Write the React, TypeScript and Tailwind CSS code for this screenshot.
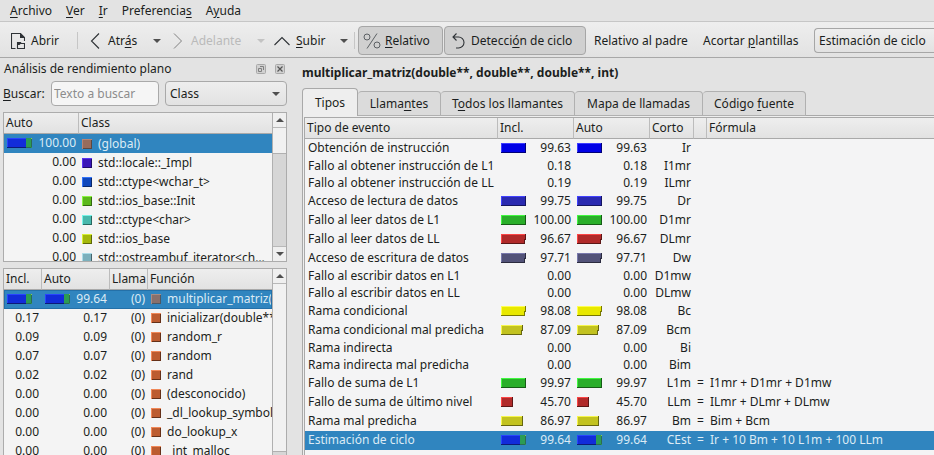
import type { ReactNode } from 'react';

const HEADER_BG = 'bg-linear-to-b from-[#eeeeee] to-[#e2e2e2]';

function Caret({ muted = false }: { muted?: boolean }) {
  return (
    <svg width="8" height="4" viewBox="0 0 8 4" className="shrink-0" aria-hidden="true">
      <path d="M0 0H8L4 4Z" fill={muted ? '#c3c3c3' : '#4f4f4f'} />
    </svg>
  );
}

function ScrollArrow({ up = false }: { up?: boolean }) {
  return (
    <svg width="8" height="4" viewBox="0 0 8 4" aria-hidden="true">
      <path d={up ? 'M0 4H8L4 0Z' : 'M0 0H8L4 4Z'} fill="#4f4f4f" />
    </svg>
  );
}

type Tone = { fill: string; light: string; dark: string };

const tones: Record<string, Tone> = {
  blue: { fill: '#0000e6', light: '#3c3cff', dark: '#000078' },
  indigo: { fill: '#2a2ab0', light: '#4141ff', dark: '#151560' },
  green: { fill: '#2aae2a', light: '#41f841', dark: '#165c16' },
  red: { fill: '#b02a2a', light: '#fb4545', dark: '#5c1616' },
  slate: { fill: '#525278', light: '#7878ac', dark: '#2a2a3e' },
  yellow: { fill: '#e8e800', light: '#ffff50', dark: '#787800' },
  olive: { fill: '#c2c220', light: '#f6f64c', dark: '#666610' },
};

function Bar({ tone, width = 25, notch = false }: { tone: string; width?: number; notch?: boolean }) {
  if (tone === 'cycle') {
    return (
      <svg width="25" height="10" viewBox="0 0 25 10" className="shrink-0" shapeRendering="crispEdges" aria-hidden="true">
        <path d="M0 0H19V10H0Z" fill="#122cda" />
        <path d="M0 0H19V1H1V10H0Z" fill="#2844ff" />
        <path d="M0 9H19V10H0Z" fill="#0c1a78" />
        <path d="M19 0H25V10H19Z" fill="#2c9c54" />
        <path d="M19 9H24V10H19ZM24 1H25V9H24Z" fill="#2c6c50" />
        <path d="M24 0H25V1H24Z" fill="#8cc850" />
      </svg>
    );
  }
  const { fill, light, dark } = tones[tone];
  const w = width;
  const shape = notch ? `M0 0H${w}V6H${w - 1}V10H0Z` : `M0 0H${w}V10H0Z`;
  const shade = notch
    ? `M0 9H${w - 2}V5H${w - 1}V0H${w}V6H${w - 1}V10H0Z`
    : `M0 9H${w - 1}V0H${w}V10H0Z`;
  return (
    <svg width={w} height="10" viewBox={`0 0 ${w} 10`} className="shrink-0" shapeRendering="crispEdges" aria-hidden="true">
      <path d={shape} fill={fill} />
      <path d={`M0 0H${w - 1}V1H1V9H0Z`} fill={light} />
      <path d={shade} fill={dark} />
    </svg>
  );
}

function Swatch({ fill, light, dark }: Tone) {
  return (
    <svg width="10" height="10" viewBox="0 0 10 10" className="shrink-0" shapeRendering="crispEdges" aria-hidden="true">
      <path d="M0 0H10V10H0Z" fill={fill} />
      <path d="M0 0H10V1H1V10H0Z" fill={light} />
      <path d="M9 1H10V10H1V9H9Z" fill={dark} />
    </svg>
  );
}

function BarCell({ bar, value }: { bar?: ReactNode; value?: string }) {
  return (
    <td className="p-0 pr-[3px] pb-px pl-[3px]">
      <div className="flex items-center justify-between">
        <span className="flex">{bar}</span>
        <span>{value}</span>
      </div>
    </td>
  );
}

function Th({ children, last = false }: { children?: ReactNode; last?: boolean }) {
  return (
    <th
      scope="col"
      className={`h-[21px] overflow-hidden border-b border-b-[#a9a9a9] p-0 pl-0.5 text-left font-normal whitespace-nowrap ${HEADER_BG} ${
        last ? '' : 'border-r border-r-[#bcbcbc]'
      }`}
    >
      {children}
    </th>
  );
}

function Scrollbar({ thumb, down = true }: { thumb: string; down?: boolean }) {
  return (
    <div className="flex w-[14px] shrink-0 flex-col border-l border-[#b0b0b0] bg-[#d6d6d6]">
      <button type="button" aria-label="Subir lista" className="flex h-[15px] shrink-0 items-center justify-center border-b border-[#b8b8b8] bg-[#efefef]">
        <ScrollArrow up />
      </button>
      <div className={`border-b border-[#b0b0b0] bg-[#f1f1f1] ${thumb}`} />
      <div className="flex-1" />
      {down && (
        <button type="button" aria-label="Bajar lista" className="flex h-[15px] shrink-0 items-center justify-center border-t border-[#b8b8b8] bg-[#efefef]">
          <ScrollArrow />
        </button>
      )}
    </div>
  );
}

const classes = [
  { value: '100.00', name: '(global)', fill: '#986c5c', light: '#b88474', dark: '#5c4840' },
  { value: '0.00', name: 'std::locale::_Impl', fill: '#3a16b8', light: '#5a34f0', dark: '#200c68' },
  { value: '0.00', name: 'std::ctype<wchar_t>', fill: '#1048bc', light: '#3474f8', dark: '#0a2868' },
  { value: '0.00', name: 'std::ios_base::Init', fill: '#5cb81c', light: '#8cf444', dark: '#346810' },
  { value: '0.00', name: 'std::ctype<char>', fill: '#48b8ac', light: '#78f4e8', dark: '#286860' },
  { value: '0.00', name: 'std::ios_base', fill: '#a4b80c', light: '#d8f034', dark: '#5c6808' },
  { value: '0.00', name: 'std::ostreambuf_iterator<char>', fill: '#7cb0bc', light: '#acdce8', dark: '#46646c' },
];

const functions = [
  ['99.64', 'multiplicar_matriz(double**, double**)'],
  ['0.17', 'inicializar(double**, int)'],
  ['0.09', 'random_r'],
  ['0.07', 'random'],
  ['0.02', 'rand'],
  ['0.00', '(desconocido)'],
  ['0.00', '_dl_lookup_symbol_x'],
  ['0.00', 'do_lookup_x'],
  ['0.00', '_int_malloc'],
];

type EventRow = { name: string; value: string; short: string; tone?: string; width?: number; notch?: boolean; formula?: string };

const events: EventRow[] = [
  { name: 'Obtención de instrucción', value: '99.63', short: 'Ir', tone: 'blue' },
  { name: 'Fallo al obtener instrucción de L1', value: '0.18', short: 'I1mr' },
  { name: 'Fallo al obtener instrucción de LL', value: '0.19', short: 'ILmr' },
  { name: 'Acceso de lectura de datos', value: '99.75', short: 'Dr', tone: 'indigo' },
  { name: 'Fallo al leer datos de L1', value: '100.00', short: 'D1mr', tone: 'green' },
  { name: 'Fallo al leer datos de LL', value: '96.67', short: 'DLmr', tone: 'red', notch: true },
  { name: 'Acceso de escritura de datos', value: '97.71', short: 'Dw', tone: 'slate', notch: true },
  { name: 'Fallo al escribir datos en L1', value: '0.00', short: 'D1mw' },
  { name: 'Fallo al escribir datos en LL', value: '0.00', short: 'DLmw' },
  { name: 'Rama condicional', value: '98.08', short: 'Bc', tone: 'yellow', notch: true },
  { name: 'Rama condicional mal predicha', value: '87.09', short: 'Bcm', tone: 'olive', width: 22, notch: true },
  { name: 'Rama indirecta', value: '0.00', short: 'Bi' },
  { name: 'Rama indirecta mal predicha', value: '0.00', short: 'Bim' },
  { name: 'Fallo de suma de L1', value: '99.97', short: 'L1m', tone: 'green', formula: 'I1mr + D1mr + D1mw' },
  { name: 'Fallo de suma de último nivel', value: '45.70', short: 'LLm', tone: 'red', width: 12, formula: 'ILmr + DLmr + DLmw' },
  { name: 'Rama mal predicha', value: '86.97', short: 'Bm', tone: 'olive', width: 22, formula: 'Bim + Bcm' },
  { name: 'Estimación de ciclo', value: '99.64', short: 'CEst', tone: 'cycle', formula: 'Ir + 10 Bm + 10 L1m + 100 LLm' },
];

function U({ children }: { children: ReactNode }) {
  return <span className="underline decoration-1 underline-offset-2">{children}</span>;
}

function MenuBar() {
  return (
    <nav className="flex h-[22px] shrink-0 items-center gap-[14px] border-b border-[#c6c6c6] px-[10px]">
      <button type="button"><U>A</U>rchivo</button>
      <button type="button"><U>V</U>er</button>
      <button type="button"><U>I</U>r</button>
      <button type="button">Preferencia<U>s</U></button>
      <button type="button">A<U>y</U>uda</button>
    </nav>
  );
}

const stroke = { fill: 'none', stroke: '#2e3236', strokeWidth: 1.1 };

function ToolBar() {
  return (
    <div className={`flex h-9 shrink-0 items-center overflow-hidden border-b border-[#a8a8a8] pt-0.5 whitespace-nowrap ${HEADER_BG}`}>
      <button type="button" className="flex w-[77px] shrink-0 items-center gap-1.5 pl-[11px]">
        <svg width="14" height="16" viewBox="0 0 14 16" aria-hidden="true">
          <path d="M4.500 15.500H.5V.5H9.500L13.500 4.500V8" {...stroke} />
          <path d="M9 0L14 5H9Z" fill="#2e3236" />
          <path d="M6.500 9.500H9L10 10.500H13.500V15.500H6.500Z" {...stroke} />
          <path d="M6 9H9.500L10.500 10L8.500 12H6Z" fill="#2e3236" />
        </svg>
        Abrir
      </button>
      <div className="h-[17px] w-px shrink-0 bg-[#c6c6c6]" />
      <button type="button" className="flex w-[75px] shrink-0 items-center gap-2 pl-3">
        <svg width="10" height="16" viewBox="0 0 10 16" aria-hidden="true"><path d="M9 .5L1.500 8L9 15.500" {...stroke} /></svg>
        <span>Atr<U>á</U>s</span>
      </button>
      <button type="button" aria-label="Historial atrás" className="flex w-[17px] shrink-0"><Caret /></button>
      <button type="button" disabled className="flex w-[87px] shrink-0 items-center gap-2 pl-[3px] text-[#bababa]">
        <svg width="10" height="16" viewBox="0 0 10 16" aria-hidden="true"><path d="M1 .5L8.500 8L1 15.500" fill="none" stroke="#808080" /></svg>
        Adelante
      </button>
      <button type="button" disabled aria-label="Historial adelante" className="flex w-[17px] shrink-0"><Caret muted /></button>
      <button type="button" className="flex w-[66px] shrink-0 items-center gap-1.5">
        <svg width="16" height="10" viewBox="0 0 16 10" aria-hidden="true"><path d="M.5 9L8 1.500L15.500 9" {...stroke} /></svg>
        <span><U>S</U>ubir</span>
      </button>
      <button type="button" aria-label="Historial subir" className="flex w-[14px] shrink-0"><Caret /></button>
      <div className="h-[17px] w-px shrink-0 bg-[#c6c6c6]" />
      <button type="button" aria-pressed="true" className="ml-[3px] flex h-[29px] w-[85px] shrink-0 items-center gap-1 rounded-sm border border-[#a6a6a6] bg-[#d0d0d0] pl-1">
        <svg width="18" height="16" viewBox="0 0 18 16" aria-hidden="true">
          <path d="M14 .5L4 15.500" fill="none" stroke="#5c6064" />
          <circle cx="4" cy="4" r="3" fill="none" stroke="#5c6064" />
          <circle cx="14" cy="12" r="3" fill="none" stroke="#5c6064" />
        </svg>
        <span><U>R</U>elativo</span>
      </button>
      <button type="button" aria-pressed="true" className="ml-px flex h-[29px] w-[142px] shrink-0 items-center gap-1.5 rounded-sm border border-[#a6a6a6] bg-[#d0d0d0] pl-[7px]">
        <svg width="13" height="16" viewBox="0 0 13 16" aria-hidden="true">
          <path d="M4.500 .5L1 4L4.500 7.500M1 4H6.500A5.500 5.500 0 0 1 6.500 15H4" {...stroke} />
        </svg>
        <span>Detecci<U>ó</U>n de ciclo</span>
      </button>
      <button type="button" className="ml-2 w-[109px] shrink-0 text-left">Relativo al padre</button>
      <button type="button" className="w-[111px] shrink-0 text-left">Acortar <U>p</U>lantillas</button>
      <select aria-label="Tipo de evento primario" className={`h-[25px] min-w-[130px] flex-1 appearance-none rounded-l-sm border border-r-0 border-[#a6a6a6] pl-1 ${HEADER_BG}`}>
        <option>Estimación de ciclo</option>
      </select>
    </div>
  );
}

function Dock() {
  return (
    <aside className="flex w-[290px] shrink-0 flex-col pr-[3px] pl-[3px]">
      <div className="flex h-[23px] shrink-0 items-center pb-0.5 pl-px">
        <h2 className="flex-1">Análisis de rendimiento plano</h2>
        <button type="button" aria-label="Desacoplar" className="mr-[9px]">
          <svg width="10" height="10" viewBox="0 0 10 10" className="block" aria-hidden="true">
            <rect x=".5" y=".5" width="9" height="9" rx="1" fill="#d0d0d0" stroke="#a8a8a8" />
            <path d="M4 2.500H7.500V6M2.500 4.500H5.500V7.500H2.500Z" fill="none" stroke="#808080" />
          </svg>
        </button>
        <button type="button" aria-label="Cerrar" className="mr-0.5">
          <svg width="10" height="10" viewBox="0 0 10 10" className="block" aria-hidden="true">
            <rect x=".5" y=".5" width="9" height="9" rx="1" fill="#d0d0d0" stroke="#a8a8a8" />
            <path d="M2.500 2.500L7.500 7.500M7.500 2.500L2.500 7.500" stroke="#555555" strokeWidth="1.2" />
          </svg>
        </button>
      </div>
      <div className="flex h-[25px] shrink-0 items-center">
        <label htmlFor="search" className="w-12 shrink-0"><U>B</U>uscar:</label>
        <input id="search" type="text" placeholder="Texto a buscar" className="h-[25px] w-[108px] rounded-sm border border-[#a9a9a9] bg-[#f5f5f5] pl-0.5 placeholder:text-[#8c8c8c]" />
        <div className="relative ml-1.5 flex-1">
          <select aria-label="Agrupación" className={`block h-[25px] w-full appearance-none rounded-sm border border-[#a9a9a9] pl-1 ${HEADER_BG}`}>
            <option>Class</option>
          </select>
          <span className="pointer-events-none absolute top-[11px] right-[7px]"><Caret /></span>
        </div>
      </div>
      <div className="mt-1.5 flex h-[150px] shrink-0 border border-[#acacac] bg-[#f4f4f4]">
        <div className="min-w-0 flex-1 overflow-hidden">
          <table className="w-full table-fixed border-separate border-spacing-0">
            <colgroup><col className="w-[75px]" /><col /></colgroup>
            <thead><tr><Th>Auto</Th><Th last>Class</Th></tr></thead>
            <tbody>
              {classes.map((c, i) => (
                <tr key={c.name} className={`h-[19px] ${i === 0 ? 'bg-[#3085bf] text-[#dcebf5]' : ''}`}>
                  <BarCell bar={i === 0 ? <Bar tone="cycle" /> : undefined} value={c.value} />
                  <td className="p-0 pr-1.5 pl-[3px]">
                    <div className="flex items-center gap-1.5">
                      <Swatch fill={c.fill} light={c.light} dark={c.dark} />
                      <span className="truncate">{c.name}</span>
                    </div>
                  </td>
                </tr>
              ))}
            </tbody>
          </table>
        </div>
        <Scrollbar thumb="h-[26px]" />
      </div>
      <div className="mt-1.5 flex min-h-0 flex-1 border border-b-0 border-[#acacac] bg-[#f4f4f4]">
        <div className="min-w-0 flex-1 overflow-hidden">
          <table className="w-full table-fixed border-separate border-spacing-0">
            <colgroup><col className="w-[38px]" /><col className="w-[68px]" /><col className="w-[38px]" /><col /></colgroup>
            <thead><tr><Th>Incl.</Th><Th>Auto</Th><Th>Llama</Th><Th last>Función</Th></tr></thead>
            <tbody>
              {functions.map(([value, name], i) => (
                <tr key={name} className={`h-[19px] ${i === 0 ? 'bg-[#3085bf] text-[#dcebf5] outline outline-offset-[-1px] outline-[#2470a8]' : ''}`}>
                  <BarCell bar={i === 0 ? <Bar tone="cycle" /> : undefined} value={i === 0 ? undefined : value} />
                  <BarCell bar={i === 0 ? <Bar tone="cycle" /> : undefined} value={value} />
                  <td className="p-0 pr-[3px] pb-px text-right">(0)</td>
                  <td className="overflow-hidden p-0 pb-px pl-[3px] whitespace-nowrap">
                    <div className="flex items-center gap-1.5">
                      {i === 0 ? (
                        <Swatch fill="#88706c" light="#a88c84" dark="#4c5864" />
                      ) : (
                        <Swatch fill="#bc5c30" light="#f08858" dark="#643018" />
                      )}
                      <span>{name}</span>
                    </div>
                  </td>
                </tr>
              ))}
            </tbody>
          </table>
        </div>
        <Scrollbar thumb="h-[168px]" down={false} />
      </div>
    </aside>
  );
}

function Tab({ children, width }: { children: ReactNode; width: string }) {
  return (
    <button type="button" role="tab" aria-selected="false" className={`h-[25px] shrink-0 rounded-t-sm border border-l-0 border-[#b0b0b0] bg-[#dbdbdb] ${width}`}>
      {children}
    </button>
  );
}

function EventPanel() {
  return (
    <main className="ml-3 flex min-w-0 flex-1 flex-col">
      <h1 className="flex h-[30px] shrink-0 items-center font-bold">multiplicar_matriz(double**, double**, double**, int)</h1>
      <div role="tablist" className="z-10 -mb-px flex h-7 shrink-0 items-end whitespace-nowrap">
        <button type="button" role="tab" aria-selected="true" className="h-7 w-14 shrink-0 rounded-t-sm border border-b-0 border-[#a9a9a9] bg-[#eeeeee]">
          Tipos
        </button>
        <Tab width="w-[83px]">Llama<U>n</U>tes</Tab>
        <Tab width="w-[134px]">T<U>o</U>dos los llamantes</Tab>
        <Tab width="w-[128px]">Mapa de llamadas</Tab>
        <Tab width="w-[103px]">Código <U>f</U>uente</Tab>
      </div>
      <div className="flex min-h-0 flex-1 flex-col border-t border-l border-[#a9a9a9] bg-[#eeeeee] pt-px pl-px">
        <div className="min-h-0 flex-1 overflow-hidden border-t border-l border-[#a9a9a9] bg-[#f4f4f5]">
          <table className="w-full table-fixed border-separate border-spacing-0">
            <colgroup>
              <col className="w-[193px]" />
              <col className="w-[76px]" />
              <col className="w-[76px]" />
              <col className="w-11" />
              <col className="w-[13px]" />
              <col />
            </colgroup>
            <thead>
              <tr><Th>Tipo de evento</Th><Th>Incl.</Th><Th>Auto</Th><Th>Corto</Th><Th /><Th last>Fórmula</Th></tr>
            </thead>
            <tbody>
              {events.map((e) => {
                const bar = e.tone ? <Bar tone={e.tone} width={e.width} notch={e.notch} /> : undefined;
                return (
                  <tr key={e.name} className={`${e.tone ? 'h-[19px]' : 'h-[17px]'} ${e.tone === 'cycle' ? 'bg-[#3085bf] text-[#dcebf5]' : ''}`}>
                    <td className="p-0 pb-px pl-[3px] whitespace-nowrap">{e.name}</td>
                    <BarCell bar={bar} value={e.value} />
                    <BarCell bar={bar} value={e.value} />
                    <td className="p-0 pr-[3px] pb-px text-right">{e.short}</td>
                    <td className="p-0 pb-px pl-[3px]">{e.formula ? '=' : ''}</td>
                    <td className="p-0 pb-px pl-[3px] whitespace-nowrap">{e.formula}</td>
                  </tr>
                );
              })}
            </tbody>
          </table>
        </div>
      </div>
    </main>
  );
}

export default function App() {
  return (
    <div className="flex h-screen flex-col overflow-hidden bg-[#e3e3e3] font-['Noto_Sans',sans-serif] text-[12px] leading-4 text-[#1b1e20]">
      <MenuBar />
      <ToolBar />
      <div className="flex min-h-0 flex-1">
        <Dock />
        <EventPanel />
      </div>
    </div>
  );
}
